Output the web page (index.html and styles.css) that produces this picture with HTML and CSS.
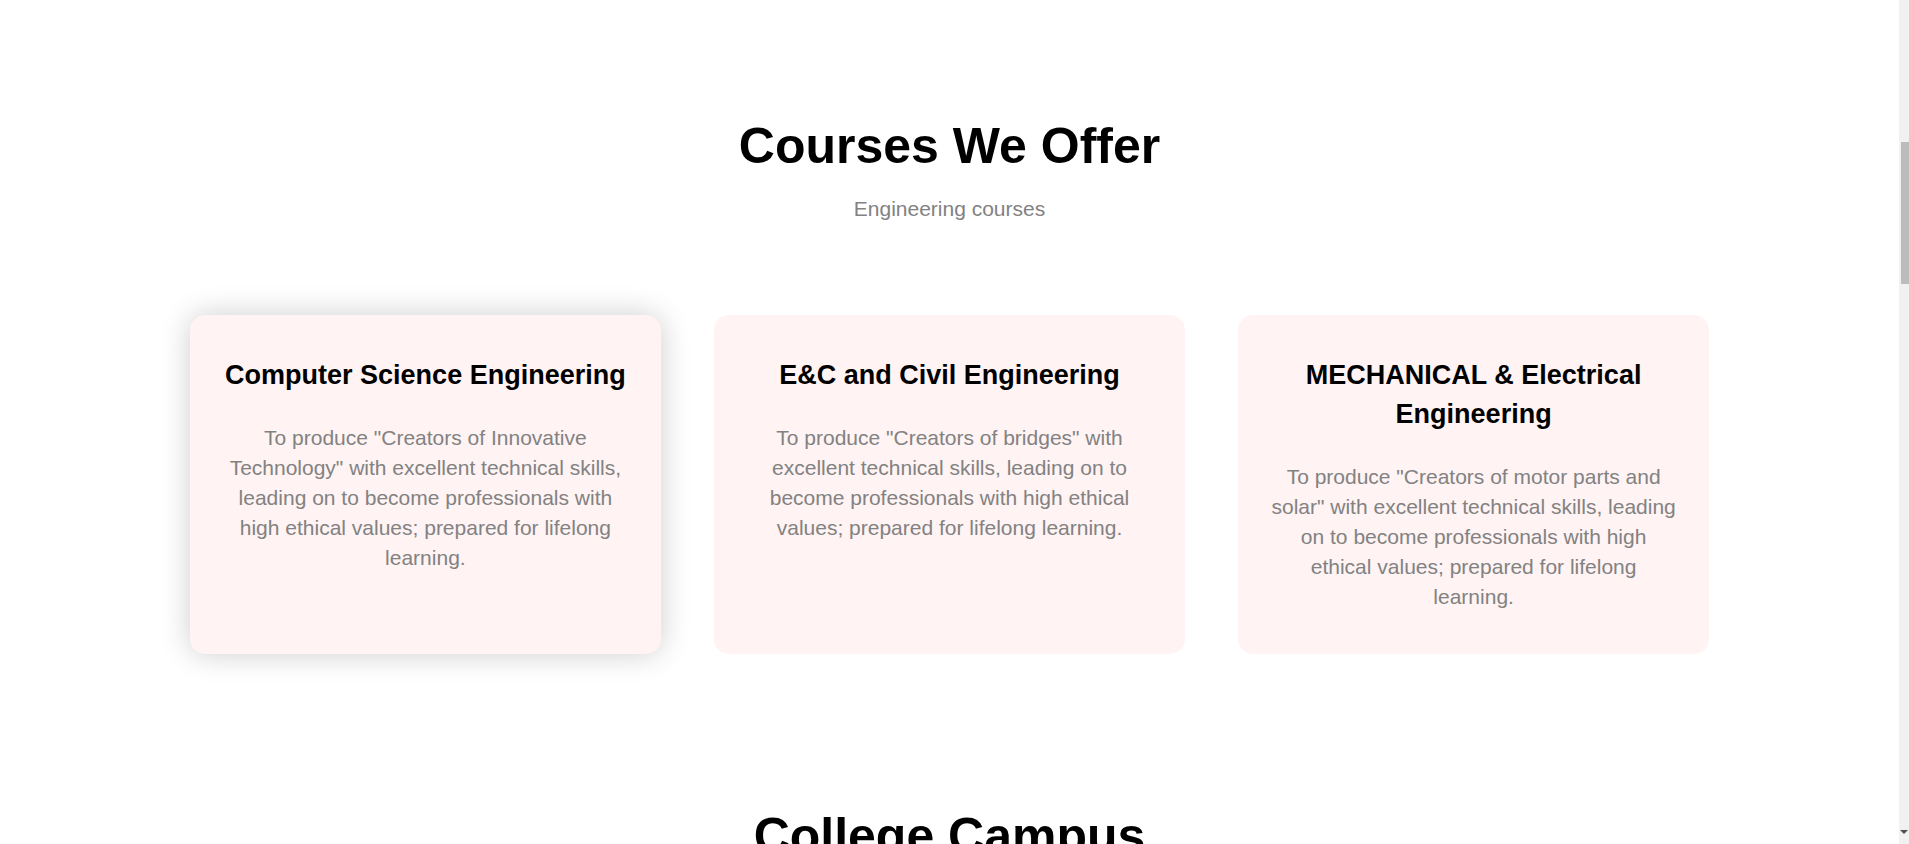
FILE: index.html
```html
<!DOCTYPE html>
<html lang="en">
<head>
<meta charset="utf-8">
<title>Courses We Offer</title>
<link rel="stylesheet" href="styles.css">
</head>
<body>
<div class="page">
  <section class="course">
    <h1 class="course-title">Courses We Offer</h1>
    <p class="course-sub">Engineering courses</p>
    <div class="row">
      <div class="course-col course-col--active">
        <h3 class="col-title">Computer Science Engineering</h3>
        <p class="col-text">To produce "Creators of Innovative Technology" with excellent technical skills, leading on to become professionals with high ethical values; prepared for lifelong learning.</p>
      </div>
      <div class="course-col">
        <h3 class="col-title">E&amp;C and Civil Engineering</h3>
        <p class="col-text">To produce "Creators of bridges" with excellent technical skills, leading on to become professionals with high ethical values; prepared for lifelong learning.</p>
      </div>
      <div class="course-col">
        <h3 class="col-title">MECHANICAL &amp; Electrical Engineering</h3>
        <p class="col-text">To produce "Creators of motor parts and solar" with excellent technical skills, leading on to become professionals with high ethical values; prepared for lifelong learning.</p>
      </div>
    </div>
  </section>
  <section class="campus">
    <h1 class="course-title">College Campus</h1>
  </section>
</div>
<div class="scrollbar"><div class="scrollbar-thumb"></div><div class="scrollbar-arrow"></div></div>
</body>
</html>
```
FILE: styles.css
```css
* {
  margin: 0;
  padding: 0;
  box-sizing: border-box;
}
html, body {
  height: 100%;
  overflow: hidden;
  background: #fff;
}
body {
  font-family: "Liberation Sans", Arial, sans-serif;
}
.page {
  margin-right: 10px;
}
.course {
  width: 80%;
  margin: 0 auto;
  text-align: center;
  padding-top: 116px;
}
.course-title {
  font-size: 50px;
  font-weight: 700;
  line-height: 60px;
  color: #000;
}
.course-sub {
  margin-top: 18px;
  font-size: 21px;
  font-weight: 400;
  line-height: 30px;
  color: #828282;
}
.row {
  margin-top: 91px;
  display: flex;
  justify-content: space-between;
}
.course-col {
  flex-basis: 31%;
  background: #fff3f3;
  border-radius: 15px;
  padding: 30px 18px 27px;
}
.course-col--active {
  box-shadow: 0 0 30px 0 rgba(0, 0, 0, 0.2);
}
.col-title {
  font-size: 27px;
  font-weight: 700;
  line-height: 39px;
  margin: 11px 0 13px;
  color: #000;
}
.col-text {
  font-size: 21px;
  font-weight: 400;
  line-height: 30px;
  color: #828282;
  padding: 15px 13px;
}
.campus {
  text-align: center;
  padding-top: 152px;
}
.scrollbar {
  position: fixed;
  top: 0;
  right: 0;
  width: 10px;
  height: 100%;
  background: #f1f1f1;
}
.scrollbar-thumb {
  position: absolute;
  top: 142px;
  right: 0;
  width: 8px;
  height: 142px;
  background: #bcbcbc;
}
.scrollbar-arrow {
  position: absolute;
  bottom: 10px;
  right: 1px;
  width: 0;
  height: 0;
  border-left: 4px solid transparent;
  border-right: 4px solid transparent;
  border-top: 4px solid #505050;
}
```
